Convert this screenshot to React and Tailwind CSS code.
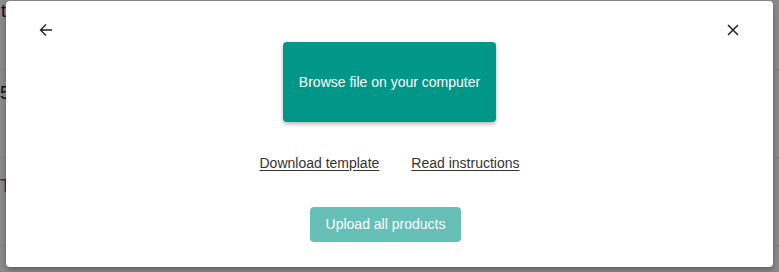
import React from "react";

export default function App() {
  return (
    <div className="relative w-[779px] h-[272px] overflow-hidden bg-[#8b8b8b]" style={{ fontFamily: '"Liberation Sans", Arial, sans-serif' }}>
      {/* background table behind overlay */}
      <div className="flex flex-col text-[#0f0f0f] text-[18px]">
        <div className="h-[70px] border-b border-[#7e7e7e] pl-[1px] pt-[0px] leading-[22px]">t</div>
        <div className="h-[88px] border-b border-[#7e7e7e] pl-[0px] pt-[12px] leading-[22px]">5</div>
        <div className="h-[88px] border-b border-[#7e7e7e] pl-[0px] pt-[17px] leading-[22px] text-[#1f3d5c]">T</div>
      </div>

      {/* modal */}
      <div className="absolute left-[6px] top-[1px] w-[767px] h-[266px] bg-white rounded-[4px] shadow-[0_3px_6px_rgba(0,0,0,0.3)] flex flex-col items-center pt-[41px]">
        <button className="absolute left-[32px] top-[21px] w-[16px] h-[16px] flex items-center justify-center text-[#222]">
          <svg width="14" height="14" viewBox="0 0 14 14" fill="none" stroke="currentColor" strokeWidth="1.4">
            <path d="M13 7H1.5M7 1.5L1.5 7L7 12.5" />
          </svg>
        </button>
        <button className="absolute left-[719px] top-[21px] w-[16px] h-[16px] flex items-center justify-center text-[#222]">
          <svg width="12" height="12" viewBox="0 0 12 12" fill="none" stroke="currentColor" strokeWidth="1.5">
            <path d="M1 1L11 11M11 1L1 11" />
          </svg>
        </button>

        <button className="w-[213px] h-[80px] bg-[#009688] rounded-[4px] text-white text-[14px] shadow-[0_2px_4px_rgba(0,0,0,0.3)]">
          Browse file on your computer
        </button>

        <div className="mt-[31px] flex gap-[32px] text-[14px] text-[#333] leading-[20px]">
          <span className="underline underline-offset-[2px]">Download template</span>
          <span className="underline underline-offset-[2px]">Read instructions</span>
        </div>

        <button className="mt-[34px] mr-[8px] w-[151px] h-[35px] bg-[#66c0b8] rounded-[4px] text-white text-[14px]">
          Upload all products
        </button>
      </div>
    </div>
  );
}
